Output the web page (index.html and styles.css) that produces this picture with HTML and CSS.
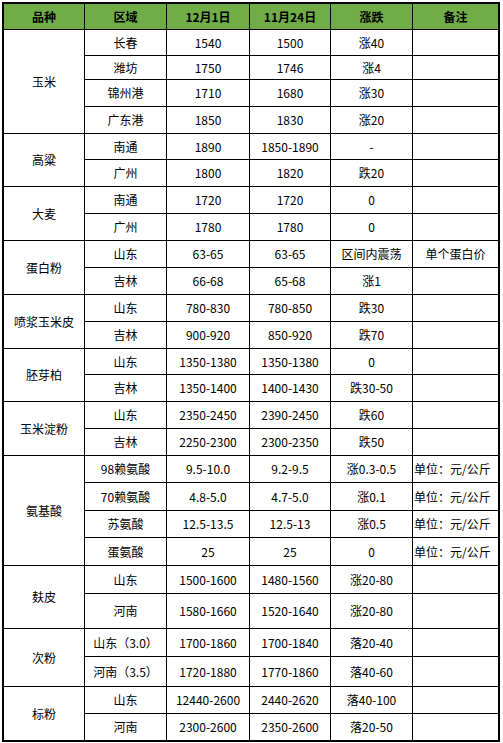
FILE: index.html
```html
<!DOCTYPE html>
<html lang="zh-CN">
<head>
<meta charset="utf-8">
<title>价格表</title>
<link rel="stylesheet" href="styles.css">
</head>
<body>
<div class="sheet">
  <div class="c h">品种</div><div class="c h">区域</div><div class="c h">12月1日</div><div class="c h">11月24日</div><div class="c h">涨跌</div><div class="c h">备注</div>

  <div class="c s4">玉米</div>
  <div class="c">长春</div><div class="c">1540</div><div class="c">1500</div><div class="c">涨40</div><div class="c"></div>
  <div class="c">潍坊</div><div class="c">1750</div><div class="c">1746</div><div class="c">涨4</div><div class="c"></div>
  <div class="c">锦州港</div><div class="c">1710</div><div class="c">1680</div><div class="c">涨30</div><div class="c"></div>
  <div class="c">广东港</div><div class="c">1850</div><div class="c">1830</div><div class="c">涨20</div><div class="c"></div>

  <div class="c s2">高粱</div>
  <div class="c">南通</div><div class="c">1890</div><div class="c">1850-1890</div><div class="c">-</div><div class="c"></div>
  <div class="c">广州</div><div class="c">1800</div><div class="c">1820</div><div class="c">跌20</div><div class="c"></div>

  <div class="c s2">大麦</div>
  <div class="c">南通</div><div class="c">1720</div><div class="c">1720</div><div class="c">0</div><div class="c"></div>
  <div class="c">广州</div><div class="c">1780</div><div class="c">1780</div><div class="c">0</div><div class="c"></div>

  <div class="c s2">蛋白粉</div>
  <div class="c">山东</div><div class="c">63-65</div><div class="c">63-65</div><div class="c">区间内震荡</div><div class="c">单个蛋白价</div>
  <div class="c">吉林</div><div class="c">66-68</div><div class="c">65-68</div><div class="c">涨1</div><div class="c"></div>

  <div class="c s2">喷浆玉米皮</div>
  <div class="c">山东</div><div class="c">780-830</div><div class="c">780-850</div><div class="c">跌30</div><div class="c"></div>
  <div class="c">吉林</div><div class="c">900-920</div><div class="c">850-920</div><div class="c">跌70</div><div class="c"></div>

  <div class="c s2">胚芽柏</div>
  <div class="c">山东</div><div class="c">1350-1380</div><div class="c">1350-1380</div><div class="c">0</div><div class="c"></div>
  <div class="c">吉林</div><div class="c">1350-1400</div><div class="c">1400-1430</div><div class="c">跌30-50</div><div class="c"></div>

  <div class="c s2">玉米淀粉</div>
  <div class="c">山东</div><div class="c">2350-2450</div><div class="c">2390-2450</div><div class="c">跌60</div><div class="c"></div>
  <div class="c">吉林</div><div class="c">2250-2300</div><div class="c">2300-2350</div><div class="c">跌50</div><div class="c"></div>

  <div class="c s4">氨基酸</div>
  <div class="c">98赖氨酸</div><div class="c">9.5-10.0</div><div class="c">9.2-9.5</div><div class="c">涨0.3-0.5</div><div class="c note">单位：元/公斤</div>
  <div class="c">70赖氨酸</div><div class="c">4.8-5.0</div><div class="c">4.7-5.0</div><div class="c">涨0.1</div><div class="c note">单位：元/公斤</div>
  <div class="c">苏氨酸</div><div class="c">12.5-13.5</div><div class="c">12.5-13</div><div class="c">涨0.5</div><div class="c note">单位：元/公斤</div>
  <div class="c">蛋氨酸</div><div class="c">25</div><div class="c">25</div><div class="c">0</div><div class="c note">单位：元/公斤</div>

  <div class="c s2">麸皮</div>
  <div class="c">山东</div><div class="c">1500-1600</div><div class="c">1480-1560</div><div class="c">涨20-80</div><div class="c"></div>
  <div class="c">河南</div><div class="c">1580-1660</div><div class="c">1520-1640</div><div class="c">涨20-80</div><div class="c"></div>

  <div class="c s2">次粉</div>
  <div class="c">山东（3.0）</div><div class="c">1700-1860</div><div class="c">1700-1840</div><div class="c">落20-40</div><div class="c"></div>
  <div class="c">河南（3.5）</div><div class="c">1720-1880</div><div class="c">1770-1860</div><div class="c">落40-60</div><div class="c"></div>

  <div class="c s2">标粉</div>
  <div class="c">山东</div><div class="c">12440-2600</div><div class="c">2440-2620</div><div class="c">落40-100</div><div class="c"></div>
  <div class="c">河南</div><div class="c">2300-2600</div><div class="c">2350-2600</div><div class="c">落20-50</div><div class="c"></div>
</div>
</body>
</html>
```

FILE: styles.css
```css
html, body {
  margin: 0;
  padding: 0;
  background: #ffffff;
}

body {
  padding: 2px 0 0 2px;
  font-family: "Noto Sans CJK SC", "Noto Sans", sans-serif;
  font-size: 12px;
  color: #000000;
}

.sheet {
  display: grid;
  width: max-content;
  grid-template-columns: 81px 82px 83px 81px 82px 86px;
  grid-template-rows: 26px 26px 24px 27px 27px 26px 27px 27px 27px 27px 27px 27px 27px 26px 27px 27px 27px 27px 28px 27px 28px 28px 35px 28px 30px 27px 27px;
  border-top: 2px solid #000;
  border-left: 2px solid #000;
  border-right: 1px solid #000;
  border-bottom: 1px solid #000;
}

.c {
  display: flex;
  align-items: center;
  justify-content: center;
  border-right: 1px solid #000;
  border-bottom: 1px solid #000;
  white-space: nowrap;
  line-height: 1;
  overflow: visible;
}

.h {
  background: #70ad47;
  font-weight: bold;
}

.s2 {
  grid-row: span 2;
}

.s4 {
  grid-row: span 4;
}

.note {
  justify-content: flex-start;
  padding-left: 1px;
}
```
